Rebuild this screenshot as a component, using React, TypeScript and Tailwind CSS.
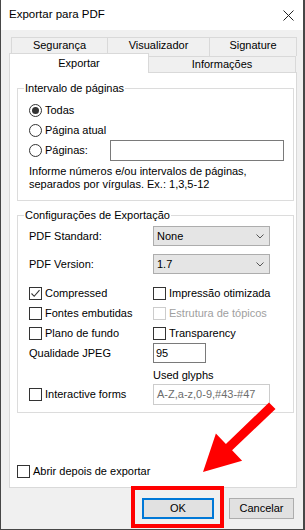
import React from 'react';

function Radio({ checked }: { checked?: boolean }) {
  return (
    <span className="w-[13px] h-[13px] rounded-full border border-[#333] bg-white flex items-center justify-center shrink-0">
      {checked && <span className="w-[7px] h-[7px] rounded-full bg-[#333]" />}
    </span>
  );
}

function Check({ checked, disabled }: { checked?: boolean; disabled?: boolean }) {
  return (
    <span
      className={
        disabled
          ? 'w-[13px] h-[13px] border border-[#cccccc] bg-white shrink-0'
          : 'w-[13px] h-[13px] border border-[#333] bg-white shrink-0 flex items-center justify-center'
      }
    >
      {checked && (
        <svg width="11" height="11" viewBox="0 0 11 11">
          <polyline points="1.5,5.5 4.2,8.3 9.5,2.2" fill="none" stroke="#333" strokeWidth="1.1" />
        </svg>
      )}
    </span>
  );
}

function CheckRow({ label, checked, disabled }: { label: string; checked?: boolean; disabled?: boolean }) {
  return (
    <div className="flex items-center gap-[3px] h-[20px]">
      <Check checked={checked} disabled={disabled} />
      <span className={disabled ? 'text-[#a0a0a0]' : ''}>{label}</span>
    </div>
  );
}

function Select({ value }: { value: string }) {
  return (
    <div className="w-[117px] h-[20px] bg-[#e5e5e5] border border-[#adadad] flex items-center justify-between pl-[3px] pr-[5px]">
      <span>{value}</span>
      <svg width="8" height="5" viewBox="0 0 8 5">
        <polyline points="0.5,0.5 4,4 7.5,0.5" fill="none" stroke="#555" strokeWidth="1" />
      </svg>
    </div>
  );
}

export default function App() {
  return (
    <div className="relative w-[305px] h-[530px] bg-[#f0f0f0] border-l border-r-2 border-b border-[#474747] text-[11px] text-black font-['Liberation_Sans',Arial,sans-serif] overflow-hidden">
      <div className="h-[30px] bg-white flex items-center justify-between pl-[8px] pr-[9px]">
        <span className="text-[11.5px]">Exportar para PDF</span>
        <svg width="11" height="11" viewBox="0 0 11 11">
          <path d="M0.5 0.5 L10.5 10.5 M10.5 0.5 L0.5 10.5" stroke="#222" strokeWidth="1" />
        </svg>
      </div>

      <div className="flex ml-[10px] mt-[7px] h-[19px] leading-[13px]">
        <div className="w-[96px] border-t border-l border-[#d9d9d9] flex justify-center pt-[1px]">Segurança</div>
        <div className="w-[102px] border-t border-l border-[#d9d9d9] flex justify-center pt-[1px]">Visualizador</div>
        <div className="w-[88px] border-t border-l border-r border-[#d9d9d9] flex justify-center pt-[1px]">Signature</div>
      </div>
      <div className="flex items-start ml-[8px] -mt-[3px] h-[20px]">
        <div className="relative z-10 w-[140px] h-[20px] bg-white border-t border-l border-r border-[#d9d9d9] flex items-center justify-center">
          Exportar
        </div>
        <div className="w-[147px] h-[16px] mt-[3px] border-t border-r border-[#d9d9d9] flex items-center justify-center">
          Informações
        </div>
      </div>

      <div className="-mt-[1px] ml-[8px] w-[288px] h-[416px] bg-white border border-[#d9d9d9] flex flex-col">
        <fieldset className="ml-[7px] mt-[8px] w-[277px] border border-[#dcdcdc] pl-[11px] pb-[9px]">
          <legend className="ml-[-5px] px-[1px] leading-[14px]">Intervalo de páginas</legend>
          <div className="pt-[5px]">
            <div className="flex items-center gap-[3px] h-[20px]">
              <Radio checked />
              <span>Todas</span>
            </div>
            <div className="flex items-center gap-[3px] h-[20px]">
              <Radio />
              <span>Página atual</span>
            </div>
            <div className="flex items-center h-[20px]">
              <div className="flex items-center gap-[3px] w-[81px]">
                <Radio />
                <span>Páginas:</span>
              </div>
              <div className="w-[174px] h-[21px] border border-[#7a7a7a] bg-white" />
            </div>
            <div className="mt-[5px] leading-[13px]">
              Informe números e/ou intervalos de páginas,
              <br />
              separados por vírgulas. Ex.: 1,3,5-12
            </div>
          </div>
        </fieldset>

        <fieldset className="ml-[7px] mt-[7px] w-[277px] border border-[#dcdcdc] pl-[11px] pb-[7px]">
          <legend className="ml-[-5px] px-[1px] leading-[14px]">Configurações de Exportação</legend>
          <div className="pt-[4px] grid grid-cols-[124px_1fr]">
            <div className="flex items-center h-[20px]">PDF Standard:</div>
            <Select value="None" />
            <div className="flex items-center h-[20px] mt-[8px]">PDF Version:</div>
            <div className="mt-[8px]">
              <Select value="1.7" />
            </div>
            <div className="mt-[9px]">
              <CheckRow label="Compressed" checked />
            </div>
            <div className="mt-[9px]">
              <CheckRow label="Impressão otimizada" />
            </div>
            <CheckRow label="Fontes embutidas" />
            <CheckRow label="Estrutura de tópicos" disabled />
            <CheckRow label="Plano de fundo" />
            <CheckRow label="Transparency" />
            <div className="flex items-center h-[20px]">Qualidade JPEG</div>
            <div className="w-[53px] h-[20px] border border-[#7a7a7a] bg-white flex items-center pl-[2px]">95</div>
            <div />
            <div className="mt-[5px] h-[14px] flex items-center">Used glyphs</div>
            <div className="mt-[2px] h-[21px] flex items-center">
              <CheckRow label="Interactive forms" />
            </div>
            <div className="mt-[2px] w-[117px] h-[21px] border border-[#cccccc] bg-white flex items-center pl-[3px] text-[#6d6d6d]">
              A-Z,a-z,0-9,#43-#47
            </div>
          </div>
        </fieldset>

        <div className="mt-auto mb-[6px] ml-[7px]">
          <CheckRow label="Abrir depois de exportar" />
        </div>
      </div>

      <div className="flex ml-[141px] mt-[10px] gap-[15px]">
        <button className="w-[72px] h-[21px] bg-[#e1e1e1] border-2 border-[#0078d7] flex items-center justify-center">
          OK
        </button>
        <button className="w-[65px] h-[21px] bg-[#e1e1e1] border border-[#adadad] flex items-center justify-center">
          Cancelar
        </button>
      </div>

      <div className="absolute left-[130px] top-[486px] w-[93px] h-[42px] border-4 border-[#ff0000]" />
      <svg className="absolute left-0 top-0 pointer-events-none" width="305" height="530" viewBox="-1 0 305 530">
        <polygon
          points="267,402.5 273.5,409 230.1,450.3 240.1,460.8 201,472 213.9,433.4 223.9,443.9"
          fill="#ff0000"
        />
      </svg>
    </div>
  );
}
